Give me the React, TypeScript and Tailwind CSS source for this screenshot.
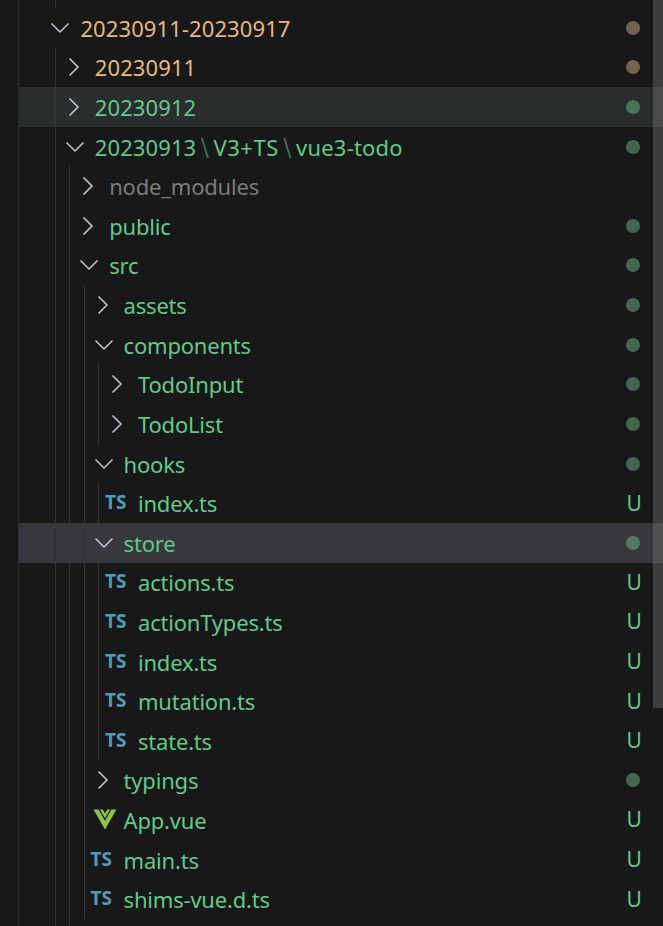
import React from "react";

const guideXs = [55, 69, 84, 98];

type Node = {
  label: React.ReactNode;
  twistie?: "open" | "closed";
  icon?: "ts" | "vue";
  depth: number;
  guides: number[];
  color: string;
  badge?: "U" | "dot" | "amber";
  bg?: string;
};

const GREEN = "text-[#62c98b]";
const AMBER = "text-[#e6b884]";
const GREY = "text-[#7b7b7b]";

const rows: Node[] = [
  { label: "20230911-20230917", twistie: "open", depth: 0, guides: [], color: AMBER, badge: "amber" },
  { label: "20230911", twistie: "closed", depth: 1, guides: [0], color: AMBER, badge: "amber" },
  { label: "20230912", twistie: "closed", depth: 1, guides: [0], color: GREEN, badge: "dot", bg: "bg-[#2a2d2e]" },
  {
    label: (
      <>
        20230913<Sep /><span className="tracking-[0.5px]">V3+TS</span><Sep /><span className="tracking-[0.2px]">vue3-todo</span>
      </>
    ),
    twistie: "open",
    depth: 1,
    guides: [0],
    color: GREEN,
    badge: "dot",
  },
  { label: "node_modules", twistie: "closed", depth: 2, guides: [0, 1], color: GREY },
  { label: "public", twistie: "closed", depth: 2, guides: [0, 1], color: GREEN, badge: "dot" },
  { label: "src", twistie: "open", depth: 2, guides: [0, 1], color: GREEN, badge: "dot" },
  { label: "assets", twistie: "closed", depth: 3, guides: [0, 1, 2], color: GREEN, badge: "dot" },
  { label: "components", twistie: "open", depth: 3, guides: [0, 1, 2], color: GREEN, badge: "dot" },
  { label: "TodoInput", twistie: "closed", depth: 4, guides: [0, 1, 2, 3], color: GREEN, badge: "dot" },
  { label: "TodoList", twistie: "closed", depth: 4, guides: [0, 1, 2, 3], color: GREEN, badge: "dot" },
  { label: "hooks", twistie: "open", depth: 3, guides: [0, 1, 2], color: GREEN, badge: "dot" },
  { label: "index.ts", icon: "ts", depth: 4, guides: [0, 1, 2, 3], color: GREEN, badge: "U" },
  { label: "store", twistie: "open", depth: 3, guides: [0, 1, 2], color: GREEN, badge: "dot", bg: "bg-[#37373d]" },
  { label: "actions.ts", icon: "ts", depth: 4, guides: [0, 1, 2, 3], color: GREEN, badge: "U" },
  { label: "actionTypes.ts", icon: "ts", depth: 4, guides: [0, 1, 2, 3], color: GREEN, badge: "U" },
  { label: "index.ts", icon: "ts", depth: 4, guides: [0, 1, 2, 3], color: GREEN, badge: "U" },
  { label: "mutation.ts", icon: "ts", depth: 4, guides: [0, 1, 2, 3], color: GREEN, badge: "U" },
  { label: "state.ts", icon: "ts", depth: 4, guides: [0, 1, 2, 3], color: GREEN, badge: "U" },
  { label: "typings", twistie: "closed", depth: 3, guides: [0, 1, 2], color: GREEN, badge: "dot" },
  { label: "App.vue", icon: "vue", depth: 3, guides: [0, 1, 2], color: GREEN, badge: "U" },
  { label: "main.ts", icon: "ts", depth: 3, guides: [0, 1, 2], color: GREEN, badge: "U" },
  { label: "shims-vue.d.ts", icon: "ts", depth: 3, guides: [0, 1, 2], color: GREEN, badge: "U" },
];

function Sep() {
  return <span className="mx-[4.5px] inline-block scale-y-125 text-[#3f6e52]">\</span>;
}

function Twistie({ kind }: { kind: "open" | "closed" }) {
  return (
    <svg width="20" height="20" viewBox="0 0 20 20" fill="none" className="ml-1 shrink-0">
      <path
        d={kind === "open" ? "M1.5 5.5 L10 14 L18.5 5.5" : "M4.5 1.5 L13 10 L4.5 18.5"}
        stroke="#c3cad6"
        strokeWidth="1.5"
      />
    </svg>
  );
}

function VueIcon() {
  return (
    <svg width="24" height="21" viewBox="0 0 24 21" className="ml-[3.5px] shrink-0">
      <path d="M0.5 0.5 H23.5 L12 20.5 Z" fill="#8dc149" />
      <path d="M6 0 L12 10.5 L18 0" fill="none" stroke="#181818" strokeWidth="1.2" />
      <path d="M9.5 0 L12 4.5 L14.5 0 Z" fill="#181818" />
    </svg>
  );
}

function Row({ row }: { row: Node }) {
  // icon slot sits left of the label, depth just pushes both over
  const labelLeft = 80.4 + row.depth * 14.4;
  const numeric = typeof row.label !== "string" || /^\d/.test(row.label);
  return (
    <div className={`relative flex h-[39.62px] items-center ${row.bg ?? ""}`}>
      {row.guides.map((g) => (
        <span
          key={g}
          className="absolute inset-y-0 w-px bg-[#333333]"
          style={{ left: guideXs[g] - 19 }}
        />
      ))}
      <div
        className="flex w-full items-center"
        style={{ paddingLeft: labelLeft - 19 - 34 }}
      >
        <span className="flex w-[34px] shrink-0 items-center justify-start">
          {row.twistie && <Twistie kind={row.twistie} />}
          {row.icon === "ts" && (
            <span className="-mt-px ml-px text-[19px] font-bold leading-none text-[#519aba]">TS</span>
          )}
          {row.icon === "vue" && <VueIcon />}
        </span>
        <span className={`text-[22px] leading-none ${numeric ? "tracking-[0.1px]" : "tracking-[-0.2px]"} ${row.color}`}>
          {row.label}
        </span>
        <span className="ml-auto flex w-[41px] shrink-0 items-center justify-start">
          {row.badge === "dot" && (
            <span className="ml-[3.7px] h-[14px] w-[14px] rounded-full bg-[#73c991]/45" />
          )}
          {row.badge === "amber" && (
            <span className="ml-[3.7px] h-[14px] w-[14px] rounded-full bg-[#e2c08d]/45" />
          )}
          {row.badge === "U" && <span className={`ml-[4.5px] text-[21px] leading-none ${GREEN}`}>U</span>}
        </span>
      </div>
    </div>
  );
}

export default function App() {
  return (
    <div
      className="relative flex h-[926px] w-[663px] overflow-hidden bg-[#181818]"
      style={{ fontFamily: '"Noto Sans", sans-serif' }}
    >
      <div className="w-[19px] shrink-0 border-r border-[#2b2b2b]" />
      <div className="relative min-w-0 flex-1 pt-[8px]">
        <span className="absolute left-[36px] top-0 h-[8px] w-px bg-[#333333]" />
        {rows.map((r, i) => (
          <Row key={i} row={r} />
        ))}
        <span className="absolute bottom-0 left-[36px] h-[7px] w-px bg-[#333333]" />
        <span className="absolute bottom-0 left-[50px] h-[7px] w-px bg-[#333333]" />
      </div>
      {/* scrollbar slider lies over the rows, so they tint it */}
      <div className="absolute right-0 top-0 h-[708px] w-[10px] bg-[#797979]/40" />
    </div>
  );
}
